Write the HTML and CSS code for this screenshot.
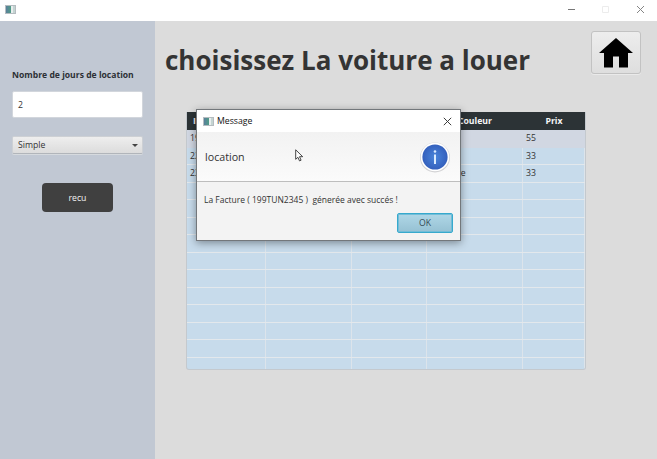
FILE: index.html
```html
<!DOCTYPE html>
<html lang="fr">
<head>
<meta charset="utf-8">
<title>Location</title>
<link rel="stylesheet" href="styles.css">
</head>
<body>
<div class="window">
  <header class="titlebar">
    <span class="app-icon"></span>
    <svg class="controls" width="80" height="12" viewBox="0 0 80 12">
      <path d="M3 4.5h7" stroke="#777"/>
      <path d="M37.5 1.500h6v6h-6z" fill="none" stroke="#ececec"/>
      <path d="M72 1l7 7M79 1l-7 7" stroke="#858585"/>
    </svg>
  </header>
  <div class="content">
    <aside class="sidebar">
      <label class="label"><span>Nombre de jours de location</span></label>
      <div class="field">2</div>
      <div class="select"><span>Simple</span><i class="arrow"></i></div>
      <button class="receipt">recu</button>
    </aside>
    <main class="main">
      <div class="top">
        <h1><span>choisissez La voiture a louer</span></h1>
        <button class="home">
          <svg width="34" height="30" viewBox="0 0 34 30"><path d="M17 0L34 15H29V29.500H20V18.500H14V29.500H5V15H0z"/></svg>
        </button>
      </div>
      <div class="table">
        <div class="row head"><b>Immatricule</b><b></b><b></b><b>Couleur</b><b>Prix</b></div>
        <div class="row selected"><span>199</span><span></span><span></span><span></span><span>55</span></div>
        <div class="row"><span>22</span><span></span><span></span><span></span><span>33</span></div>
        <div class="row"><span>23</span><span></span><span></span><span class="color">Rouge</span><span>33</span></div>
        <div class="row"><span></span><span></span><span></span><span></span><span></span></div>
        <div class="row"><span></span><span></span><span></span><span></span><span></span></div>
        <div class="row"><span></span><span></span><span></span><span></span><span></span></div>
        <div class="row"><span></span><span></span><span></span><span></span><span></span></div>
        <div class="row"><span></span><span></span><span></span><span></span><span></span></div>
        <div class="row"><span></span><span></span><span></span><span></span><span></span></div>
        <div class="row"><span></span><span></span><span></span><span></span><span></span></div>
        <div class="row"><span></span><span></span><span></span><span></span><span></span></div>
        <div class="row"><span></span><span></span><span></span><span></span><span></span></div>
        <div class="row"><span></span><span></span><span></span><span></span><span></span></div>
        <div class="row"><span></span><span></span><span></span><span></span><span></span></div>
      </div>
    </main>
  </div>
</div>
<section class="dialog">
  <div class="dialog-title">
    <span class="app-icon"></span><span class="caption">Message</span>
    <svg width="9" height="9" viewBox="0 0 9 9"><path d="M.8.8l7.400 7.400M8.200.8L.8 8.200" stroke="#333" stroke-width=".95"/></svg>
  </div>
  <div class="dialog-head">
    <span>location</span>
    <svg width="32" height="32" viewBox="0 0 32 32">
      <defs><radialGradient id="blue"><stop offset="0" stop-color="#4a85da"/><stop offset="1" stop-color="#3460bd"/></radialGradient></defs>
      <circle cx="16" cy="16.500" r="15" fill="#d2d2d4"/>
      <circle cx="16" cy="16" r="14.300" fill="#fff"/>
      <circle cx="16" cy="16" r="12.600" fill="url(#blue)"/>
      <path d="M16 13.500v9.500" stroke="#dcecff" stroke-width="2"/>
      <circle cx="16" cy="10.500" r="1.300" fill="#dcecff"/>
    </svg>
  </div>
  <div class="dialog-body">
    <p>La Facture ( 199TUN2345 )&nbsp; génerée avec succés !</p>
    <button class="ok">OK</button>
  </div>
</section>
<svg class="cursor" width="9" height="13" viewBox="0 0 9 13"><path d="M.7.8v9.500l2.200-2 1.600 3.600 1.600-.7-1.600-3.500h3.200z" fill="#fff" stroke="#333" stroke-width=".9"/></svg>
</body>
</html>
```

FILE: styles.css
```css
* { box-sizing: border-box; }
body {
  margin: 0;
  font: 8.7px/12px "Open Sans", "Noto Sans", sans-serif;
  color: #333;
  overflow: hidden;
}
button { font: inherit; padding: 0; }
.window { width: 657px; height: 459px; display: flex; flex-direction: column; }
.titlebar {
  height: 21px;
  background: #fff;
  display: flex;
  justify-content: space-between;
  padding: 5px 12px 0 5px;
}
.app-icon {
  width: 11px;
  height: 9px;
  border: 1px solid #b5bcc0;
  background: linear-gradient(90deg, #5a7f9b 0, #4f9c86 5px, #e9eeee 5px, #e9eeee 7px, #c4d4d2 7px);
}
.controls { width: 80px; height: 12px; margin-right: 0; }
.content { flex: 1; display: flex; }
.sidebar {
  width: 155px;
  background: #c1c8d3;
  padding: 48px 12px 0;
  display: flex;
  flex-direction: column;
}
.label { height: 12px; font-weight: 700; font-size: 8.6px; white-space: nowrap; color: #2d3035; }
.field {
  width: 131px;
  height: 27px;
  margin-top: 10px;
  padding: 7px 5px;
  border: 1px solid #d2d6dc;
  border-radius: 2px;
  background: #fff;
}
.select {
  width: 131px;
  height: 18px;
  margin-top: 18px;
  padding: 2px 5px;
  display: flex;
  justify-content: space-between;
  border: 1px solid #cdd0d4;
  border-bottom-color: #b1b5ba;
  border-radius: 2px;
  background: linear-gradient(#eee, #dcdcdc);
  box-shadow: 0 1px #d6dade;
}
.select { padding-right: 4px; }
.arrow { margin-top: 5px; border: 3px solid transparent; border-top-color: #444; height: 0; }
.receipt {
  width: 71px;
  height: 29px;
  margin: 29px 0 0 30px;
  border: 0;
  border-radius: 4px;
  background: #404040;
  color: #f3f3f3;
}
.main { flex: 1; background: #dcdcdc; }
.top { height: 90px; display: flex; justify-content: space-between; padding: 10px 16px 0 10px; }
h1 { margin: 12px 0 0; font-size: 26px; line-height: 34px; white-space: nowrap; color: #343434; }
.home {
  width: 50px;
  height: 43px;
  display: flex;
  justify-content: center;
  padding-top: 6px;
  border: 1px solid #c2c2c2;
  border-radius: 3px;
  background: linear-gradient(#ededed, #dedede);
  box-shadow: 0 1px #eaeaea;
}
.table {
  width: 400px;
  height: 258px;
  margin: 1px 0 0 31px;
  overflow: hidden;
  border: 1px solid #c4c9ce;
  border-top: 0;
  border-radius: 0 0 3px 3px;
  background: #c7dbeb;
}
.row {
  display: grid;
  grid-template-columns: 79px 86px 75px 96px 62px;
  height: 17.5px;
  border-bottom: 1px solid #e3e8ec;
}
.row span { border-right: 1px solid #dce4eb; padding: 2px 3px; }
.row .color { padding-left: 13px; }
.head { height: 18px; background: #2c3336; border: 0; color: #f6f6f6; text-align: center; line-height: 18px; }
.head b:first-child { text-align: left; padding-left: 6px; }
.selected { background: #d1d7e2; border-color: #d1d7e2; }
.selected span { border-right-color: #d1d7e2; }
.dialog {
  position: absolute;
  left: 196px;
  top: 109px;
  width: 265px;
  height: 132px;
  border: 1px solid #73777b;
  background: #f3f3f3;
  box-shadow: 0 2px 8px rgba(0, 0, 0, .38);
}
.dialog-title { height: 22px; display: flex; align-items: center; background: #fff; padding: 0 8px 0 6px; }
.caption { margin: 0 auto 0 3px; color: #111; }
.dialog-head {
  height: 50px;
  display: flex;
  align-items: center;
  justify-content: space-between;
  padding: 0 9px 0 8px;
  border-bottom: 1px solid #bdbdbd;
  background: linear-gradient(#f2f2f2, #fbfbfb);
  font-size: 10.7px;
}
.dialog-body { display: flex; flex-direction: column; padding: 12px 7px 0; }
.dialog-body p { margin: 0; white-space: nowrap; font-size: 8.5px; }
.ok {
  align-self: flex-end;
  width: 56px;
  height: 20px;
  margin-top: 7px;
  border: 1px solid #36a9cd;
  border-radius: 2px;
  background: linear-gradient(#afd7e7, #96c1d3);
  box-shadow: inset 0 0 0 1px #72bdd8;
  color: #344b55;
}
.cursor { position: absolute; left: 295px; top: 149px; }
```
